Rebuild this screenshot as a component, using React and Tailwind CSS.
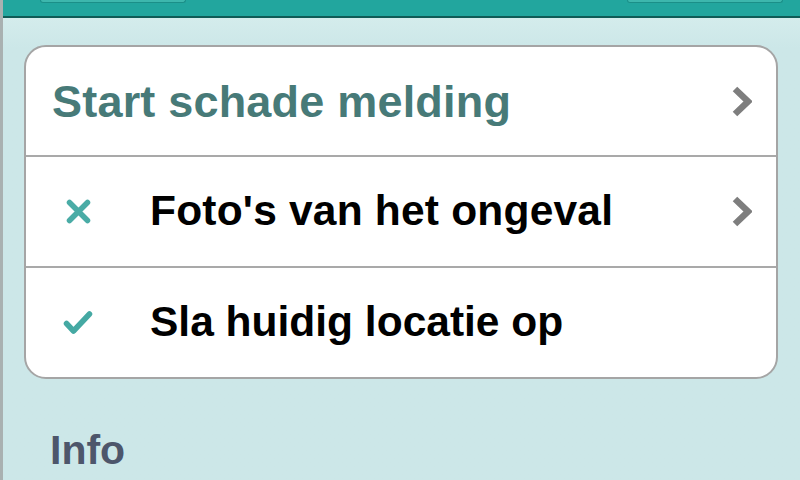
import React from 'react'

function Chevron() {
  return (
    <svg width="20" height="31" viewBox="0 0 20 31" className="shrink-0">
      <path d="M3 3 L16 15.5 L3 28" fill="none" stroke="#7e7e7e" strokeWidth="6.5" strokeLinejoin="miter" />
    </svg>
  )
}

function Cross() {
  return (
    <svg width="25" height="25" viewBox="0 0 25 25" className="shrink-0">
      <path d="M3.5 3.5 L21.5 21.5 M21.5 3.5 L3.5 21.5" fill="none" stroke="#4aaca6" strokeWidth="5.5" strokeLinecap="round" />
    </svg>
  )
}

function Check() {
  return (
    <svg width="30" height="26" viewBox="0 0 30 26" className="shrink-0">
      <path d="M3.5 13.5 L10.5 21 L26.5 4" fill="none" stroke="#45a9a3" strokeWidth="5.5" strokeLinecap="round" strokeLinejoin="round" />
    </svg>
  )
}

export default function App() {
  const font = { fontFamily: '"Liberation Sans", Arial, sans-serif' }

  return (
    <div className="w-[800px] h-[480px] overflow-hidden flex flex-col border-l-[3px] border-[#a9b1b1] bg-[#cce7e8]" style={font}>
      {/* nav bar */}
      <div className="h-[16px] bg-[#22a69e] flex justify-between items-start pl-[37px] pr-[17px] shrink-0">
        <div className="w-[146px] h-[3px] bg-[#3db7ad] border-x border-b border-[#1b8f88] rounded-b-[3px]" />
        <div className="w-[156px] h-[3px] bg-[#3db7ad] border-x border-b border-[#1b8f88] rounded-b-[3px]" />
      </div>
      <div className="h-[2px] bg-[#0f5c57] shrink-0" />

      <div className="flex-1 bg-gradient-to-b from-[#d4ecec] to-[#cce7e8] to-[30px] pl-[21px] pr-[22px]">
        <div className="mt-[27px] bg-white border-2 border-[#a5a5a5] rounded-[22px] overflow-hidden">
          <div className="h-[110px] flex items-center justify-between pl-[26px] pr-[24px] border-b-2 border-[#a9a9a9]">
            <span className="text-[45px] leading-none font-bold tracking-[0.2px] text-[#477a78]">Start schade melding</span>
            <Chevron />
          </div>
          <div className="h-[111px] flex items-center pl-[40px] pr-[24px] border-b-2 border-[#a9a9a9]">
            <Cross />
            <span className="ml-[59px] flex-1 text-[42.5px] leading-none font-bold tracking-[0.2px] text-black">Foto's van het ongeval</span>
            <Chevron />
          </div>
          <div className="h-[109px] flex items-center pl-[37px] pr-[24px]">
            <Check />
            <span className="ml-[57px] flex-1 text-[42.5px] leading-none font-bold text-black">Sla huidig locatie op</span>
          </div>
        </div>

        <div className="mt-[51px] pl-[26px] text-[41px] leading-none font-bold text-[#4d566b]">Info</div>
      </div>
    </div>
  )
}
